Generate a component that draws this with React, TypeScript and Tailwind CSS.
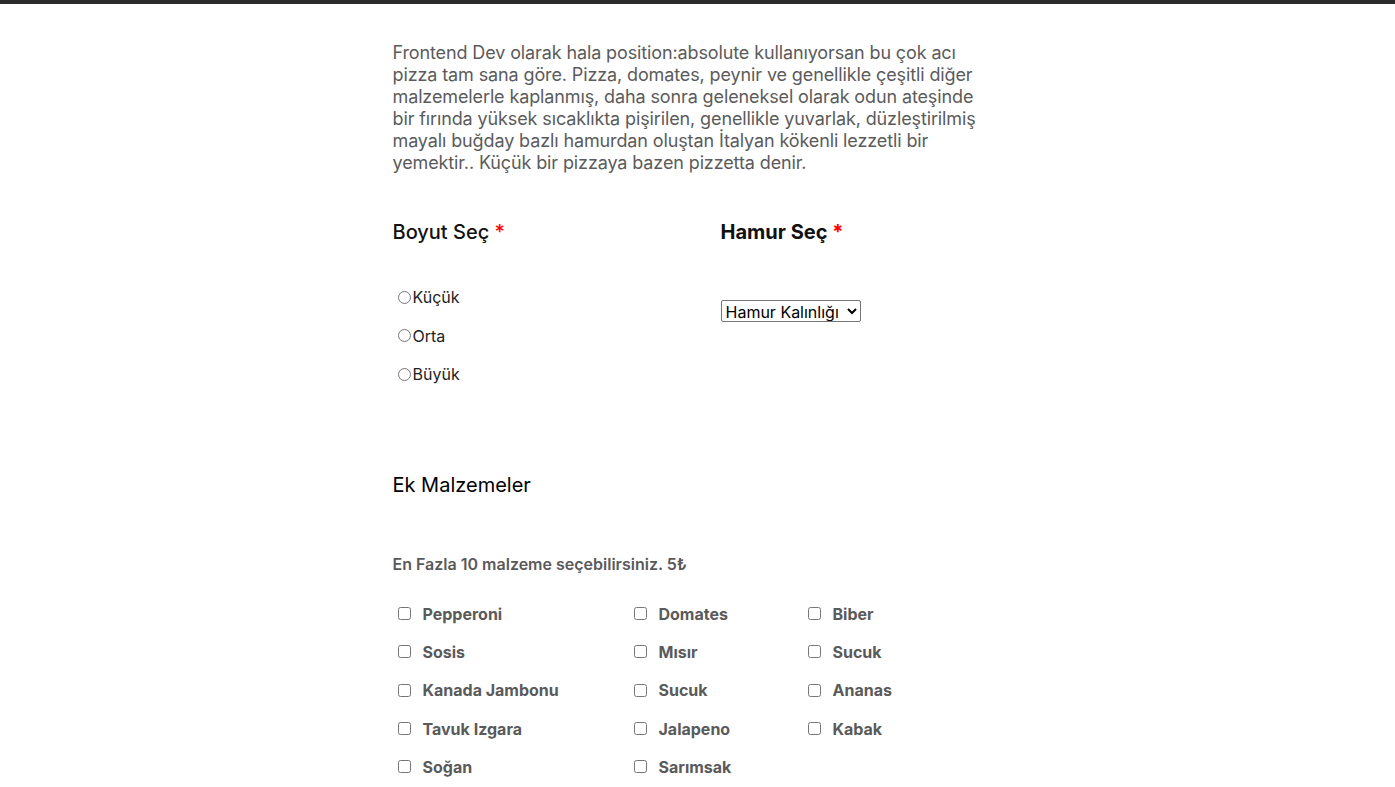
import React from "react";

const col1 = ["Pepperoni", "Sosis", "Kanada Jambonu", "Tavuk Izgara", "Soğan"];
const col2 = ["Domates", "Mısır", "Sucuk", "Jalapeno", "Sarımsak"];
const col3 = ["Biber", "Sucuk", "Ananas", "Kabak"];

const Malzeme = ({ name }: { name: string }) => (
  <label className="flex items-center h-[38.3px] text-[16px] font-bold text-[#5a5a5a]">
    <input type="checkbox" className="w-[13px] h-[13px] ml-[5px] mr-[12px]" />
    {name}
  </label>
);

export default function App() {
  return (
    <div className="min-h-screen bg-white" style={{ fontFamily: "Inter, 'Liberation Sans', sans-serif" }}>
      <div className="h-[4px] bg-[#2b2b2b]" />
      <main className="w-[610px] mx-auto pt-[38px] pr-[20px]">
        {/* aciklama */}
        <p className="text-[18px] leading-[22px] tracking-[-0.12px] text-[#5b5b5b]">
          Frontend Dev olarak hala position:absolute kullanıyorsan bu çok acı pizza tam sana göre. Pizza,
          domates, peynir ve genellikle çeşitli diğer malzemelerle kaplanmış, daha sonra geleneksel olarak
          odun ateşinde bir fırında yüksek sıcaklıkta pişirilen, genellikle yuvarlak, düzleştirilmiş mayalı
          buğday bazlı hamurdan oluştan İtalyan kökenli lezzetli bir yemektir.. Küçük bir pizzaya bazen
          pizzetta denir.
        </p>

        <div className="flex mt-[46px]">
          <div className="w-[328px]">
            <h3 className="text-[20px] font-medium text-[#111] leading-[24px]">
              Boyut Seç <span className="text-[#ff0000]">*</span>
            </h3>
            <div className="mt-[34px] flex flex-col text-[16px] text-[#222]">
              {["Küçük", "Orta", "Büyük"].map((s) => (
                <label key={s} className="flex items-center h-[38.5px]">
                  <input type="radio" name="boyut" className="w-[13px] h-[13px] ml-[5px] mr-[2px]" />
                  {s}
                </label>
              ))}
            </div>
          </div>
          <div>
            <h3 className="text-[20px] font-bold text-[#111] leading-[24px]">
              Hamur Seç <span className="text-[#ff0000]">*</span>
            </h3>
            <select className="mt-[56px] h-[22px] w-[140px] text-[16px] border border-[#767676] rounded-[2px] text-black">
              <option>Hamur Kalınlığı</option>
            </select>
          </div>
        </div>

        <h3 className="mt-[79px] text-[20px] text-black leading-[24px]">Ek Malzemeler</h3>
        <p className="mt-[55px] text-[16px] font-semibold text-[#5a5a5a]">
          En Fazla 10 malzeme seçebilirsiniz. 5₺
        </p>

        <div className="mt-[19px] grid grid-cols-[236px_174px_auto]">
          <div>{col1.map((m) => <Malzeme key={m} name={m} />)}</div>
          <div>{col2.map((m) => <Malzeme key={m} name={m} />)}</div>
          <div>{col3.map((m) => <Malzeme key={m} name={m} />)}</div>
        </div>
      </main>
    </div>
  );
}
